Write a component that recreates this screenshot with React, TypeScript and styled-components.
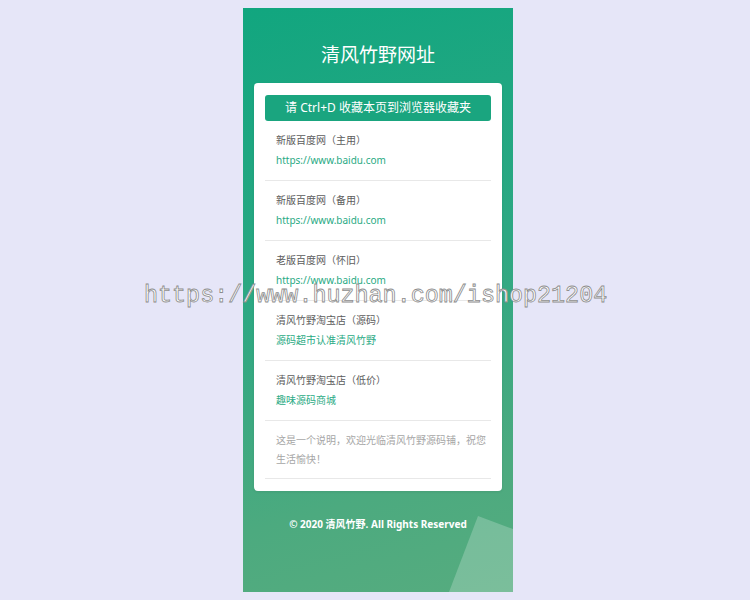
import React from "react";
import styled, { createGlobalStyle } from "styled-components";

const Global = createGlobalStyle`
  html, body { background: #e6e6f8; }
  body {
    margin: 8px 0 8px 6px;
    font-family: "Noto Sans", "Noto Sans CJK SC", sans-serif;
  }
`;

const Panel = styled.div`
  position: relative;
  overflow: hidden;
  width: 270px;
  height: 584px;
  margin: 0 auto;
  box-sizing: border-box;
  padding: 0 11px;
  display: flex;
  flex-direction: column;
  background: linear-gradient(165deg, #11a67f 0%, #2da883 45%, #4caa7f 80%, #56ac7f 100%);
`;

const Decor = styled.svg`
  position: absolute;
  right: 0;
  bottom: 0;
  width: 64px;
  height: 76px;
`;

const Title = styled.h1`
  margin: 0;
  padding: 33px 0 0;
  height: 75px;
  box-sizing: border-box;
  text-align: center;
  color: #fff;
  font-weight: 400;
  font-size: 19px;
  line-height: 26px;
  font-family: "Noto Sans CJK SC", sans-serif;
`;

const Card = styled.div`
  position: relative;
  background: #fff;
  border-radius: 4px;
  padding: 12px 11px 12px;
  box-shadow: 0 1px 3px rgba(0, 0, 0, 0.08);
`;

const Notice = styled.div`
  height: 26px;
  border-radius: 3px;
  background: #1aa57f;
  color: #fff;
  font-size: 12px;
  line-height: 26px;
  text-align: center;
  font-family: "Noto Sans", "Noto Sans CJK SC", sans-serif;
`;

const Item = styled.div`
  padding: 9px 0 10px 11px;
  border-bottom: 1px solid #e8e8e8;
`;

const ItemTitle = styled.div`
  font-size: 10px;
  line-height: 20px;
  color: #5c5c5c;
`;

const ItemLink = styled.a`
  display: block;
  font-size: 10px;
  line-height: 20px;
  color: #2aaa84;
  text-decoration: none;
`;

const Desc = styled.div`
  padding: 10px 0 9px 11px;
  font-size: 10px;
  line-height: 19px;
  color: #a6a6a6;
  border-bottom: 1px solid #e8e8e8;
`;

const Footer = styled.div`
  position: relative;
  padding-top: 24px;
  text-align: center;
  color: #fff;
  font-size: 10px;
  line-height: 18px;
  font-weight: 700;
`;

const Watermark = styled.div`
  position: absolute;
  left: 144px;
  top: 285px;
  font-family: "Liberation Mono", monospace;
  font-size: 23.4px;
  line-height: 23px;
  letter-spacing: 0;
  color: #fff;
  -webkit-text-stroke: 0.8px #8c8c8c;
  white-space: nowrap;
  pointer-events: none;
`;

const items = [
  { title: "新版百度网（主用）", link: "https://www.baidu.com" },
  { title: "新版百度网（备用）", link: "https://www.baidu.com" },
  { title: "老版百度网（怀旧）", link: "https://www.baidu.com" },
  { title: "清风竹野淘宝店（源码）", link: "源码超市认准清风竹野" },
  { title: "清风竹野淘宝店（低价）", link: "趣味源码商城" },
];

export default function App() {
  return (
    <>
      <Global />
      <Panel>
        <Decor viewBox="0 0 64 76" preserveAspectRatio="none">
          <polygon points="29,0 64,13 64,76 0,76" fill="rgba(255,255,255,0.22)" />
        </Decor>
        <Title>清风竹野网址</Title>
        <Card>
          <Notice>请 Ctrl+D 收藏本页到浏览器收藏夹</Notice>
          {items.map((it, i) => (
            <Item key={i}>
              <ItemTitle>{it.title}</ItemTitle>
              <ItemLink href="#">{it.link}</ItemLink>
            </Item>
          ))}
          <Desc>这是一个说明，欢迎光临清风竹野源码铺，祝您生活愉快！</Desc>
        </Card>
        <Footer>© 2020 清风竹野. All Rights Reserved</Footer>
      </Panel>
      <Watermark>https://www.huzhan.com/ishop21204</Watermark>
    </>
  );
}
